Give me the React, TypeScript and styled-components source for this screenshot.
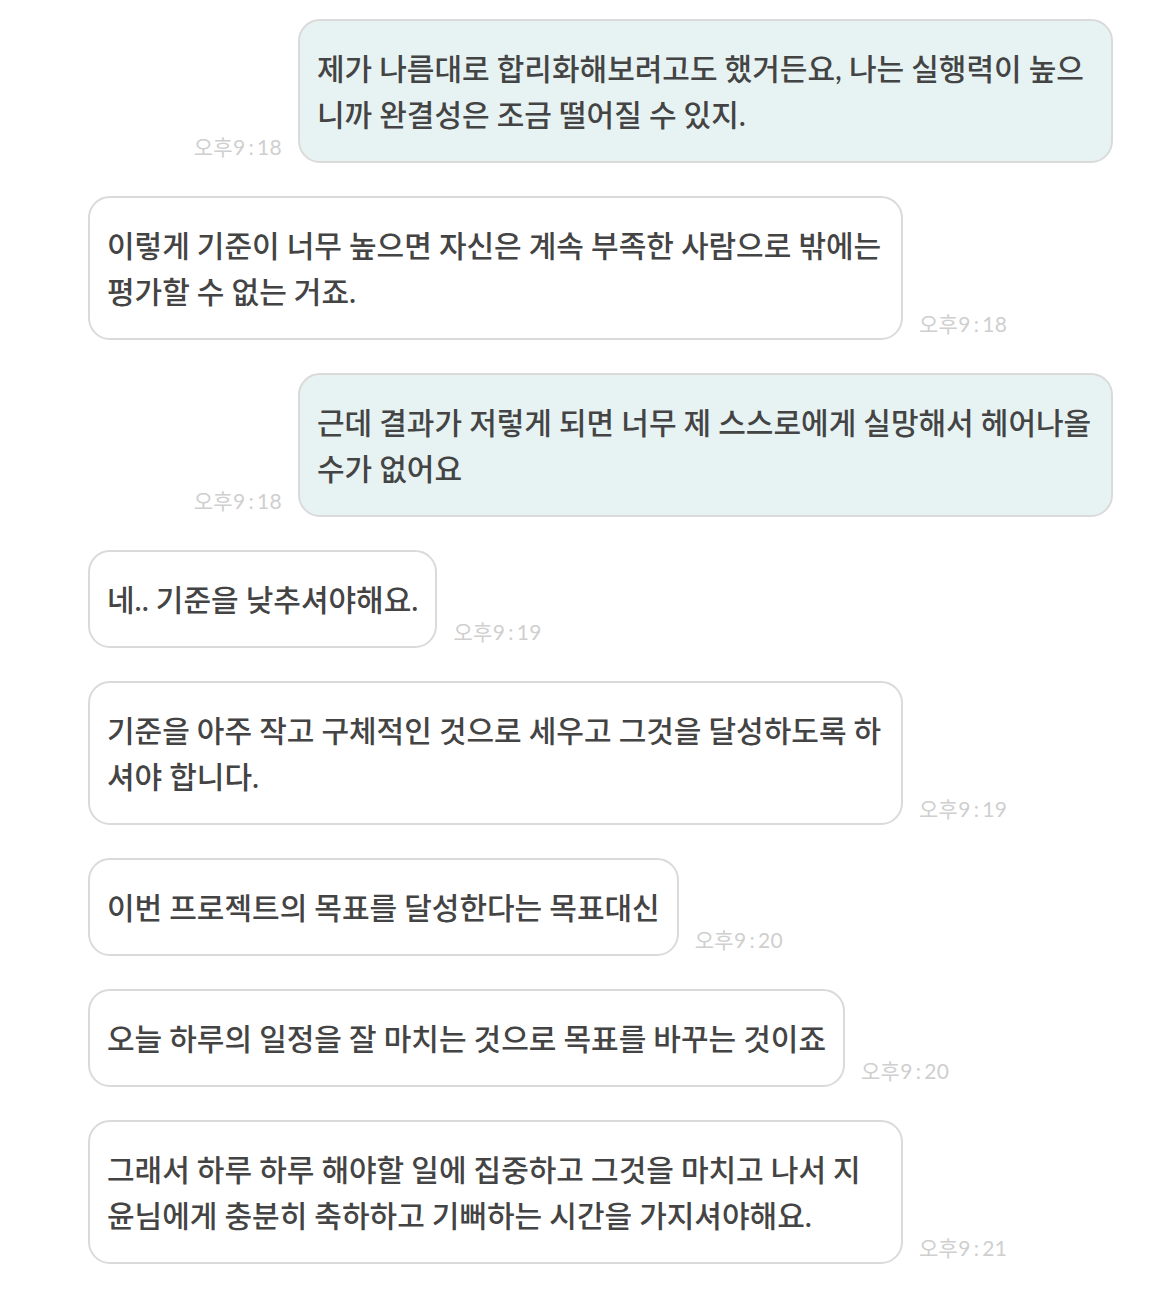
import React from 'react';
import styled, { createGlobalStyle } from 'styled-components';

const GlobalStyle = createGlobalStyle`
  html, body {
    margin: 0;
    padding: 0;
    background: #ffffff;
  }
  body {
    font-family: Lato, "Noto Sans CJK KR", sans-serif;
    color: #444444;
  }
`

const Chat = styled.div`
  display: flex;
  flex-direction: column;
  gap: 33px;
  padding: 19px 47px 24px 88px;
`

const Row = styled.div<{ $mine: boolean }>`
  display: flex;
  flex-direction: ${p => (p.$mine ? 'row-reverse' : 'row')};
  align-items: flex-end;
  gap: 16px;
`

const Bubble = styled.div<{ $mine: boolean }>`
  max-width: 815px;
  box-sizing: border-box;
  padding: 24px 17px 24px;
  border: 2px solid #dadada;
  border-radius: 22px;
  background: ${p => (p.$mine ? '#e7f3f3' : '#ffffff')};
  font-family: Lato, "Noto Sans CJK KR", sans-serif;
  font-size: 30px;
  font-weight: 500;
  line-height: 46px;
  word-spacing: -0.5px;
  color: #444444;
  word-break: break-all;
`

const Time = styled.span`
  flex-shrink: 0;
  margin-bottom: 4px;
  font-family: Lato, "Noto Sans CJK KR", sans-serif;
  font-size: 21px;
  line-height: 24px;
  color: #cfcfcf;
  white-space: nowrap;
  letter-spacing: 0.3px;
`

const Colon = styled.span`
  margin: 0 3px;
`

type Message = { text: string; time: string; mine?: boolean }

const messages: Message[] = [
  { text: '제가 나름대로 합리화해보려고도 했거든요, 나는 실행력이 높으니까 완결성은 조금 떨어질 수 있지.', time: '오후9:18', mine: true },
  { text: '이렇게 기준이 너무 높으면 자신은 계속 부족한 사람으로 밖에는 평가할 수 없는 거죠.', time: '오후9:18' },
  { text: '근데 결과가 저렇게 되면 너무 제 스스로에게 실망해서 헤어나올 수가 없어요', time: '오후9:18', mine: true },
  { text: '네.. 기준을 낮추셔야해요.', time: '오후9:19' },
  { text: '기준을 아주 작고 구체적인 것으로 세우고 그것을 달성하도록 하셔야 합니다.', time: '오후9:19' },
  { text: '이번 프로젝트의 목표를 달성한다는 목표대신', time: '오후9:20' },
  { text: '오늘 하루의 일정을 잘 마치는 것으로 목표를 바꾸는 것이죠', time: '오후9:20' },
  { text: '그래서 하루 하루 해야할 일에 집중하고 그것을 마치고 나서 지윤님에게 충분히 축하하고 기뻐하는 시간을 가지셔야해요.', time: '오후9:21' },
]

function Stamp({ time }: { time: string }) {
  const [h, m] = time.split(':')
  return (
    <Time>
      {h}
      <Colon>:</Colon>
      {m}
    </Time>
  )
}

export default function App() {
  return (
    <>
      <GlobalStyle />
      <Chat>
        {messages.map((m, i) => (
          <Row key={i} $mine={!!m.mine}>
            <Bubble $mine={!!m.mine}>{m.text}</Bubble>
            <Stamp time={m.time} />
          </Row>
        ))}
      </Chat>
    </>
  );
}
